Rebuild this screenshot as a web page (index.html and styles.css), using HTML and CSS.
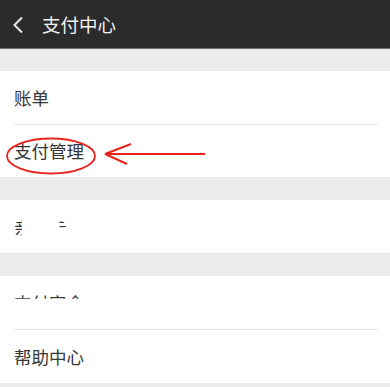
FILE: index.html
```html
<!DOCTYPE html>
<html lang="zh-CN">
<head>
<meta charset="utf-8">
<link rel="stylesheet" href="styles.css">
</head>
<body>
<div class="page">
  <header class="topbar">
    <svg class="back" width="12" height="18" viewBox="0 0 12 18"><path d="M10 1.5 L2.5 9 L10 16.5" fill="none" stroke="#e8e8e8" stroke-width="2"/></svg>
    <span class="title">支付中心</span>
  </header>
  <div class="gap first"></div>
  <section class="group">
    <div class="row"><span class="label">账单</span></div>
    <div class="row"><span class="label">支付管理</span></div>
    <svg class="mark" width="220" height="50" viewBox="0 0 220 50">
      <ellipse cx="51" cy="25" rx="44" ry="17.5" fill="none" stroke="#e8231e" stroke-width="1.8"/>
      <path d="M105 23 H205 M105 23 L131 13 M105 23 L127 33" fill="none" stroke="#e8231e" stroke-width="2"/>
    </svg>
  </section>
  <div class="gap"></div>
  <section class="group">
    <div class="row"><span class="label faded"><span class="c1">亲</span><span class="c2">属</span><span class="c3">卡</span></span></div>
  </section>
  <div class="gap"></div>
  <section class="group">
    <div class="row"><span class="label faded top">支付安全</span></div>
    <div class="row"><span class="label">帮助中心</span></div>
  </section>
  <div class="gap"></div>
</div>
</body>
</html>
```
FILE: styles.css
```css
* { box-sizing: border-box; }
html, body { margin: 0; padding: 0; background: #ebebeb; }
body { font-family: "Noto Sans CJK SC", "Noto Sans", sans-serif; }
.page { width: 390px; height: 387px; overflow: hidden; background: #ebebeb; }
.topbar {
  height: 49px;
  background: #2b2b2b;
  border-bottom: 1px solid #6e6e6e;
  display: flex;
  align-items: center;
  padding-left: 12px;
}
.back { margin-right: 18px; margin-top: 1px; }
.title { color: #f2f2f2; font-size: 18.5px; letter-spacing: 0; line-height: 1; }
.gap { height: 23px; }
.gap.first { height: 22px; }
.group { background: #fff; position: relative; }
.row {
  height: 53px;
  margin: 0 12px 0 14px;
  display: flex;
  align-items: center;
  border-top: 1px solid #e6e6e6;
}
.row:first-child { border-top: none; }
.group:last-of-type .row:last-child { height: 54px; }
.label { color: #363636; font-size: 17.5px; line-height: 1; }
.faded { display: flex; }
.c1 { clip-path: inset(0 55% 0 0); }
.c2 { visibility: hidden; }
.c3 { clip-path: inset(15% 0 45% 60%); }
.top { clip-path: inset(0 0 72% 0); }
.mark { position: absolute; left: 0; top: 60px; }
```
